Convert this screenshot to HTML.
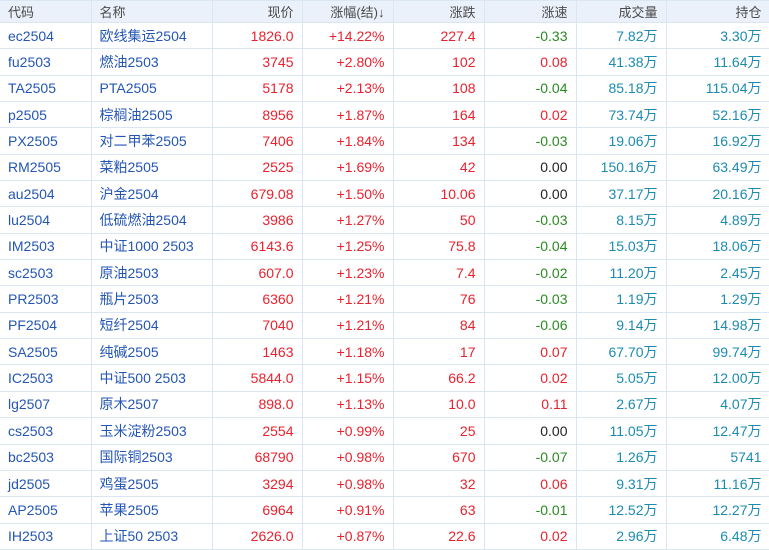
<!DOCTYPE html>
<html><head><meta charset="utf-8"><style>
*{margin:0;padding:0;box-sizing:border-box}
body{width:769px;height:549px;overflow:hidden;background:#fff;font-family:"Liberation Sans","Noto Sans CJK SC",sans-serif;font-size:14px}
table{border-collapse:collapse;table-layout:fixed;width:770px}
td,th{border:1px solid #dbe6f3;white-space:nowrap;overflow:hidden;padding:0 8px 0 8px}
th{height:22px;background:#eaf1fa;font-weight:normal;color:#4a4a4a;font-size:13px}
td{height:26.35px}
.l{text-align:left}.r{text-align:right}
th.l,td.l{padding-left:8px}
.b{color:#2456b4}.red{color:#e8222e}.g{color:#2a8a22}.k{color:#222}.t{color:#1c8bb0}
tr>*:first-child{border-left:none}
</style></head><body>
<table>
<colgroup><col style="width:91px"><col style="width:121px"><col style="width:90px"><col style="width:91px"><col style="width:91px"><col style="width:92px"><col style="width:90px"><col style="width:104px"></colgroup>
<tr><th class="l">代码</th><th class="l">名称</th><th class="r">现价</th><th class="r">涨幅(结)↓</th><th class="r">涨跌</th><th class="r">涨速</th><th class="r">成交量</th><th class="r">持仓</th></tr>
<tr><td class="l b">ec2504</td><td class="l b">欧线集运2504</td><td class="r red">1826.0</td><td class="r red">+14.22%</td><td class="r red">227.4</td><td class="r g">-0.33</td><td class="r t">7.82万</td><td class="r t">3.30万</td></tr>
<tr><td class="l b">fu2503</td><td class="l b">燃油2503</td><td class="r red">3745</td><td class="r red">+2.80%</td><td class="r red">102</td><td class="r red">0.08</td><td class="r t">41.38万</td><td class="r t">11.64万</td></tr>
<tr><td class="l b">TA2505</td><td class="l b">PTA2505</td><td class="r red">5178</td><td class="r red">+2.13%</td><td class="r red">108</td><td class="r g">-0.04</td><td class="r t">85.18万</td><td class="r t">115.04万</td></tr>
<tr><td class="l b">p2505</td><td class="l b">棕榈油2505</td><td class="r red">8956</td><td class="r red">+1.87%</td><td class="r red">164</td><td class="r red">0.02</td><td class="r t">73.74万</td><td class="r t">52.16万</td></tr>
<tr><td class="l b">PX2505</td><td class="l b">对二甲苯2505</td><td class="r red">7406</td><td class="r red">+1.84%</td><td class="r red">134</td><td class="r g">-0.03</td><td class="r t">19.06万</td><td class="r t">16.92万</td></tr>
<tr><td class="l b">RM2505</td><td class="l b">菜粕2505</td><td class="r red">2525</td><td class="r red">+1.69%</td><td class="r red">42</td><td class="r k">0.00</td><td class="r t">150.16万</td><td class="r t">63.49万</td></tr>
<tr><td class="l b">au2504</td><td class="l b">沪金2504</td><td class="r red">679.08</td><td class="r red">+1.50%</td><td class="r red">10.06</td><td class="r k">0.00</td><td class="r t">37.17万</td><td class="r t">20.16万</td></tr>
<tr><td class="l b">lu2504</td><td class="l b">低硫燃油2504</td><td class="r red">3986</td><td class="r red">+1.27%</td><td class="r red">50</td><td class="r g">-0.03</td><td class="r t">8.15万</td><td class="r t">4.89万</td></tr>
<tr><td class="l b">IM2503</td><td class="l b">中证1000 2503</td><td class="r red">6143.6</td><td class="r red">+1.25%</td><td class="r red">75.8</td><td class="r g">-0.04</td><td class="r t">15.03万</td><td class="r t">18.06万</td></tr>
<tr><td class="l b">sc2503</td><td class="l b">原油2503</td><td class="r red">607.0</td><td class="r red">+1.23%</td><td class="r red">7.4</td><td class="r g">-0.02</td><td class="r t">11.20万</td><td class="r t">2.45万</td></tr>
<tr><td class="l b">PR2503</td><td class="l b">瓶片2503</td><td class="r red">6360</td><td class="r red">+1.21%</td><td class="r red">76</td><td class="r g">-0.03</td><td class="r t">1.19万</td><td class="r t">1.29万</td></tr>
<tr><td class="l b">PF2504</td><td class="l b">短纤2504</td><td class="r red">7040</td><td class="r red">+1.21%</td><td class="r red">84</td><td class="r g">-0.06</td><td class="r t">9.14万</td><td class="r t">14.98万</td></tr>
<tr><td class="l b">SA2505</td><td class="l b">纯碱2505</td><td class="r red">1463</td><td class="r red">+1.18%</td><td class="r red">17</td><td class="r red">0.07</td><td class="r t">67.70万</td><td class="r t">99.74万</td></tr>
<tr><td class="l b">IC2503</td><td class="l b">中证500 2503</td><td class="r red">5844.0</td><td class="r red">+1.15%</td><td class="r red">66.2</td><td class="r red">0.02</td><td class="r t">5.05万</td><td class="r t">12.00万</td></tr>
<tr><td class="l b">lg2507</td><td class="l b">原木2507</td><td class="r red">898.0</td><td class="r red">+1.13%</td><td class="r red">10.0</td><td class="r red">0.11</td><td class="r t">2.67万</td><td class="r t">4.07万</td></tr>
<tr><td class="l b">cs2503</td><td class="l b">玉米淀粉2503</td><td class="r red">2554</td><td class="r red">+0.99%</td><td class="r red">25</td><td class="r k">0.00</td><td class="r t">11.05万</td><td class="r t">12.47万</td></tr>
<tr><td class="l b">bc2503</td><td class="l b">国际铜2503</td><td class="r red">68790</td><td class="r red">+0.98%</td><td class="r red">670</td><td class="r g">-0.07</td><td class="r t">1.26万</td><td class="r t">5741</td></tr>
<tr><td class="l b">jd2505</td><td class="l b">鸡蛋2505</td><td class="r red">3294</td><td class="r red">+0.98%</td><td class="r red">32</td><td class="r red">0.06</td><td class="r t">9.31万</td><td class="r t">11.16万</td></tr>
<tr><td class="l b">AP2505</td><td class="l b">苹果2505</td><td class="r red">6964</td><td class="r red">+0.91%</td><td class="r red">63</td><td class="r g">-0.01</td><td class="r t">12.52万</td><td class="r t">12.27万</td></tr>
<tr><td class="l b">IH2503</td><td class="l b">上证50 2503</td><td class="r red">2626.0</td><td class="r red">+0.87%</td><td class="r red">22.6</td><td class="r red">0.02</td><td class="r t">2.96万</td><td class="r t">6.48万</td></tr>
</table>
</body></html>
